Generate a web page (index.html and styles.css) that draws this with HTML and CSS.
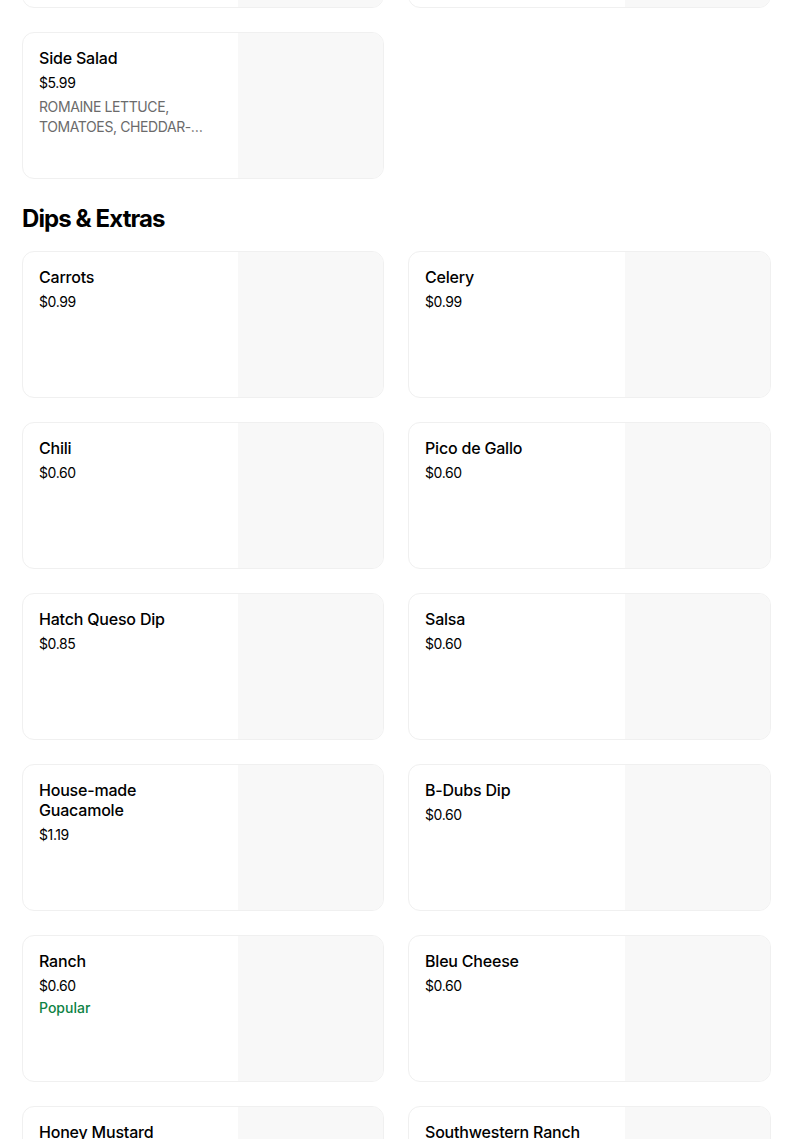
FILE: index.html
```html
<!DOCTYPE html>
<html lang="en">
<head>
<meta charset="utf-8">
<title>Menu</title>
<link rel="stylesheet" href="styles.css">
</head>
<body>
<main class="menu">
  <section class="section section-first">
    <div class="grid">
      <div class="card"><div class="info"></div><div class="thumb"></div></div>
      <div class="card"><div class="info"></div><div class="thumb"></div></div>
      <div class="card">
        <div class="info">
          <div class="title">Side Salad</div>
          <div class="price">$5.99</div>
          <div class="desc">ROMAINE LETTUCE, TOMATOES, CHEDDAR-JACK CHEESE, CROUTONS</div>
        </div>
        <div class="thumb"></div>
      </div>
    </div>
  </section>

  <section class="section">
    <h2 class="heading">Dips &amp; Extras</h2>
    <div class="grid">
      <div class="card"><div class="info"><div class="title">Carrots</div><div class="price">$0.99</div></div><div class="thumb"></div></div>
      <div class="card"><div class="info"><div class="title">Celery</div><div class="price">$0.99</div></div><div class="thumb"></div></div>
      <div class="card"><div class="info"><div class="title">Chili</div><div class="price">$0.60</div></div><div class="thumb"></div></div>
      <div class="card"><div class="info"><div class="title">Pico de Gallo</div><div class="price">$0.60</div></div><div class="thumb"></div></div>
      <div class="card"><div class="info"><div class="title">Hatch Queso Dip</div><div class="price">$0.85</div></div><div class="thumb"></div></div>
      <div class="card"><div class="info"><div class="title">Salsa</div><div class="price">$0.60</div></div><div class="thumb"></div></div>
      <div class="card"><div class="info"><div class="title">House-made Guacamole</div><div class="price">$1.19</div></div><div class="thumb"></div></div>
      <div class="card"><div class="info"><div class="title">B-Dubs Dip</div><div class="price">$0.60</div></div><div class="thumb"></div></div>
      <div class="card"><div class="info"><div class="title">Ranch</div><div class="price">$0.60</div><div class="tag">Popular</div></div><div class="thumb"></div></div>
      <div class="card"><div class="info"><div class="title">Bleu Cheese</div><div class="price">$0.60</div></div><div class="thumb"></div></div>
      <div class="card"><div class="info"><div class="title">Honey Mustard</div><div class="price">$0.60</div></div><div class="thumb"></div></div>
      <div class="card"><div class="info"><div class="title">Southwestern Ranch</div><div class="price">$0.60</div></div><div class="thumb"></div></div>
    </div>
  </section>
</main>
</body>
</html>
```

FILE: styles.css
```css
* { box-sizing: border-box; }

html, body {
  margin: 0;
  padding: 0;
  background: #ffffff;
}

body {
  font-family: Inter, "Noto Sans", "Liberation Sans", sans-serif;
  color: #000000;
  -webkit-font-smoothing: antialiased;
}

.menu {
  width: 749px;
  margin-left: 22px;
}

.section-first {
  margin-top: -139px;
}

.heading {
  margin: 24px 0 16px;
  font-size: 24px;
  line-height: 32px;
  font-weight: 700;
  letter-spacing: -0.9px;
}

.grid {
  display: grid;
  grid-template-columns: 362px 363px;
  column-gap: 24px;
  row-gap: 24px;
}

.card {
  display: flex;
  height: 147px;
  border: 1px solid #f0f0f0;
  border-radius: 12px;
  overflow: hidden;
  background: #ffffff;
}

.info {
  flex: 1 1 auto;
  min-width: 0;
  padding: 15px 16px 16px 16px;
}

.thumb {
  flex: 0 0 145px;
  background: #f8f8f8;
}

.title {
  font-size: 16px;
  line-height: 20px;
  font-weight: 500;
  letter-spacing: -0.2px;
}

.price {
  margin-top: 5px;
  font-size: 14px;
  line-height: 20px;
  font-weight: 400;
  letter-spacing: -0.4px;
}

.desc {
  margin-top: 4px;
  font-size: 14px;
  line-height: 20px;
  color: #6b6b6b;
  letter-spacing: -0.4px;
  display: -webkit-box;
  -webkit-line-clamp: 2;
  -webkit-box-orient: vertical;
  overflow: hidden;
}

.tag {
  margin-top: 2px;
  font-size: 14px;
  line-height: 20px;
  font-weight: 500;
  color: #0e8345;
}
```
